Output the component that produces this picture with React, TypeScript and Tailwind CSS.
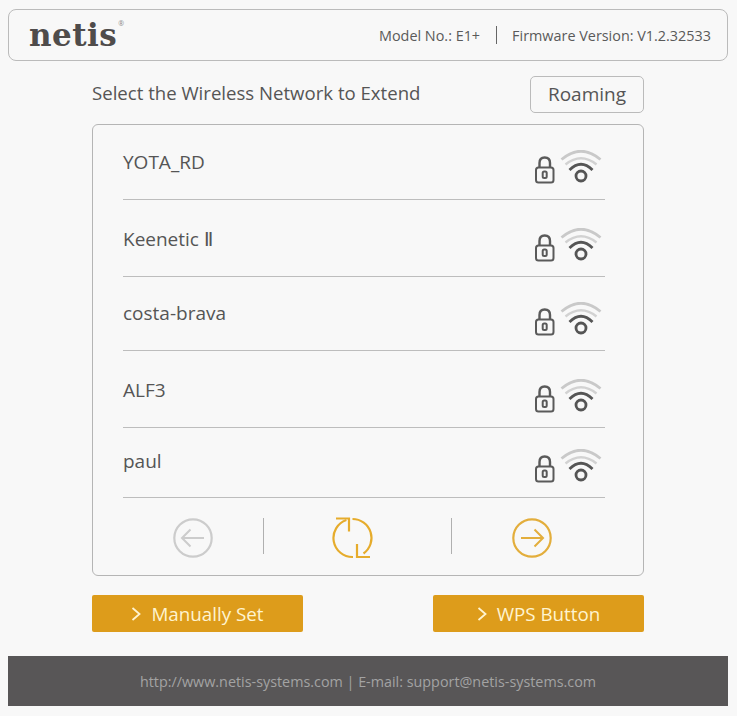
import React from 'react';

const networks = [
  { name: 'YOTA_RD', row: 'h-[75px] pt-[24px]', icon: 'mt-[1px]' },
  { name: 'Keenetic Ⅱ', row: 'h-[77px] pt-[26px]', icon: 'mt-[2px]' },
  { name: 'costa-brava', row: 'h-[74px] pt-[23px]', icon: 'mt-[2px]' },
  { name: 'ALF3', row: 'h-[77px] pt-[26px]', icon: 'mt-[2px]' },
  { name: 'paul', row: 'h-[70px] pt-[20px]', icon: 'mt-[1px]' },
];

function SignalIcon() {
  return (
    <svg width="70" height="35" viewBox="0 0 70 35" fill="none" className="block">
      <path d="M5.5 18 V13 C5.5 9.5 7.5 7.5 10.7 7.5 C14 7.5 16 9.5 16 13 V18" stroke="#5a5a5a" strokeWidth="2.4" />
      <rect x="2" y="17.5" width="17.5" height="15" rx="2.5" stroke="#5a5a5a" strokeWidth="2" />
      <rect x="8.7" y="21.5" width="4" height="6.5" rx="1.5" stroke="#5a5a5a" strokeWidth="2" />
      <path d="M27.5 9.5 Q47 -7 66.5 9.5" stroke="#c9c9c9" strokeWidth="2.8" />
      <path d="M31.5 14.5 Q47 2 62.5 14.5" stroke="#d2d2d2" strokeWidth="2.4" />
      <path d="M35.5 20 Q47 8.5 58.5 20" stroke="#555555" strokeWidth="2.8" />
      <circle cx="47" cy="26" r="5" stroke="#555555" strokeWidth="2.8" />
    </svg>
  );
}

function ArrowCircle({ color, dir }: { color: string; dir: 'left' | 'right' }) {
  return (
    <svg width="40" height="40" viewBox="0 0 40 40" fill="none" stroke={color} strokeWidth="2" className="block">
      <circle cx="20" cy="20" r="18.7" strokeWidth="2.2" />
      {dir === 'left' ? (
        <path d="M31 20 H9 M17.5 11.5 L9 20 L17.5 28.5" />
      ) : (
        <path d="M9 20 H31 M22.5 11.5 L31 20 L22.5 28.5" />
      )}
    </svg>
  );
}

function RefreshIcon() {
  return (
    <svg width="42" height="42" viewBox="0 0 42 42" fill="none" stroke="#e6ac2c" strokeWidth="2.2" className="block">
      <path d="M14.4 3 A19 19 0 0 0 21 40" />
      <path d="M20.5 2 A19 19 0 0 1 31.5 36.5" />
      <path d="M4 1.5 H17 V14.5" />
      <path d="M25 27 V40 H38" />
    </svg>
  );
}

function ActionButton({ label }: { label: string }) {
  return (
    <button className="flex h-[37px] w-[211px] items-center justify-center gap-[10px] rounded-[2px] bg-[#dd9c1b] pt-[1px] text-[18.8px] text-[#fff4d0]">
      <svg width="10" height="14" viewBox="0 0 10 14" fill="none" stroke="#fff4d0" strokeWidth="1.8">
        <path d="M1.5 1 L8.5 7 L1.5 13" />
      </svg>
      {label}
    </button>
  );
}

export default function App() {
  return (
    <div className="h-[716px] bg-[#f8f8f8] pt-[9px] font-['Open_Sans',sans-serif] text-[#555555]">
      <header className="mx-[8px] flex h-[52px] w-[720px] items-center justify-between rounded-[8px] border border-[#bbbbbb] pl-[20px] pr-[16px]">
        <div className="flex items-start">
          <span className="font-['DejaVu_Serif',serif] text-[31px] font-bold leading-none tracking-[0.5px] text-[#4f4c4b]">netis</span>
          <span className="ml-[1px] text-[7px] leading-none text-[#888888]">®</span>
        </div>
        <div className="flex items-center pt-[1px] text-[14.4px] text-[#5a5a5a]">
          <span className="mr-[1px]">Model No.: E1+</span>
          <span className="mx-[15px] h-[18px] w-px bg-[#666666]" />
          <span>Firmware Version: V1.2.32533</span>
        </div>
      </header>

      <div className="ml-[92px] mt-[15px] flex w-[552px] items-center justify-between">
        <h1 className="pb-[3px] text-[18.6px] font-normal text-[#555555]">Select the Wireless Network to Extend</h1>
        <button className="h-[37px] w-[114px] rounded-[5px] border border-[#bbbbbb] text-[19px] text-[#555555]">Roaming</button>
      </div>

      <section className="ml-[92px] mt-[11px] h-[452px] w-[552px] rounded-[6px] border border-[#b5b5b5] pl-[30px] pr-[38px]">
        {networks.map((n) => (
          <div key={n.name} className={`flex justify-between border-b border-[#bdbdbd] ${n.row}`}>
            <span className="text-[19px] leading-[26px] text-[#555555]">{n.name}</span>
            <div className={`mr-[1px] ${n.icon}`}>
              <SignalIcon />
            </div>
          </div>
        ))}
        <div className="mt-[20px] flex items-start">
          <div className="ml-[50px]">
            <ArrowCircle color="#cccccc" dir="left" />
          </div>
          <span className="ml-[50px] h-[36px] w-px bg-[#b0b0b0]" />
          <div className="ml-[68px] -mt-[1px]">
            <RefreshIcon />
          </div>
          <span className="ml-[77px] h-[36px] w-px bg-[#b0b0b0]" />
          <div className="ml-[60px]">
            <ArrowCircle color="#e3ae3c" dir="right" />
          </div>
        </div>
      </section>

      <div className="ml-[92px] mt-[19px] flex w-[552px] justify-between">
        <ActionButton label="Manually Set" />
        <ActionButton label="WPS Button" />
      </div>

      <footer className="ml-[8px] mt-[24px] flex h-[50px] w-[720px] items-center justify-center bg-[#585657] pt-[1px] text-[14.35px] text-[#a3a3a3]">
        http://www.netis-systems.com | E-mail: support@netis-systems.com
      </footer>
    </div>
  );
}
